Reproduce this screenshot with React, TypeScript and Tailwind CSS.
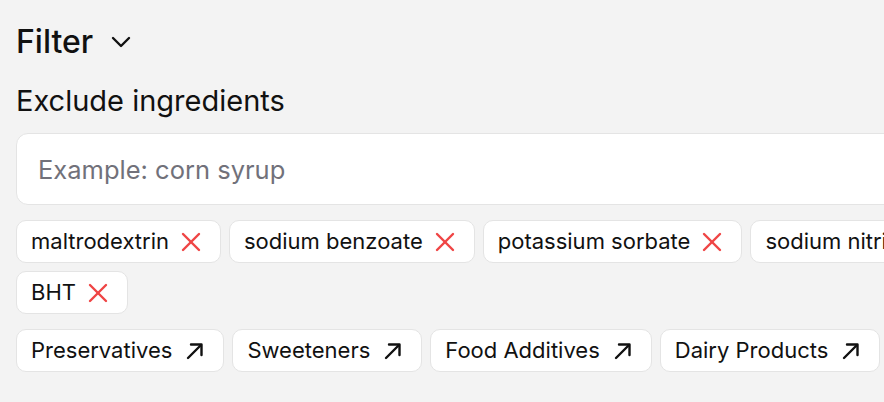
const excluded = [
  "maltrodextrin",
  "sodium benzoate",
  "potassium sorbate",
  "sodium nitrite",
  "BHT",
];

const categories = [
  "Preservatives",
  "Sweeteners",
  "Food Additives",
  "Dairy Products",
];

function ChevronIcon() {
  return (
    <svg width="20" height="12" viewBox="0 0 20 12" fill="none" stroke="currentColor" strokeWidth="2.4" strokeLinecap="round" strokeLinejoin="round">
      <polyline points="2,2 10,10 18,2" />
    </svg>
  );
}

function CrossIcon() {
  return (
    <svg width="20" height="20" viewBox="0 0 20 20" fill="none" stroke="#ef4444" strokeWidth="2.4" strokeLinecap="round">
      <line x1="2" y1="2" x2="18" y2="18" />
      <line x1="18" y1="2" x2="2" y2="18" />
    </svg>
  );
}

function ArrowIcon() {
  return (
    <svg width="18" height="18" viewBox="0 0 18 18" fill="none" stroke="currentColor" strokeWidth="2.4" strokeLinecap="round" strokeLinejoin="round">
      <line x1="2" y1="16" x2="15" y2="3" />
      <polyline points="5,2.5 15.5,2.5 15.5,13" />
    </svg>
  );
}

export default function App() {
  return (
    <div
      className="min-h-[402px] w-[1032px] bg-[#f3f3f3] px-4 pt-[22px] text-[#111111]"
      style={{ fontFamily: "Inter, 'Noto Sans', sans-serif" }}
    >
      <button className="flex items-center gap-[18px]">
        <span className="text-[32px] font-medium leading-[40px]">Filter</span>
        <ChevronIcon />
      </button>

      <h2 className="mt-[21px] text-[29px] leading-[36px]">
        Exclude ingredients
      </h2>

      <input
        type="text"
        placeholder="Example: corn syrup"
        className="mt-[14px] h-[72px] w-[1000px] rounded-[12px] border border-[#e4e4e4] bg-white px-[21px] text-[25.5px] outline-none placeholder:text-[#71717a]"
      />

      <div className="mt-[15px] flex w-[1000px] flex-wrap gap-2">
        {excluded.map((name) => (
          <span
            key={name}
            className="flex h-[43px] items-center gap-[12px] rounded-[10px] border border-[#e4e4e4] bg-white pl-[14px] pr-[19px] text-[22px]"
          >
            {name}
            <CrossIcon />
          </span>
        ))}
      </div>

      <div className="mt-[15px] flex w-[1000px] flex-wrap gap-2">
        {categories.map((name) => (
          <a
            key={name}
            className="flex h-[43px] items-center gap-[14px] rounded-[10px] border border-[#e4e4e4] bg-white pl-[14px] pr-[19px] text-[22px]"
          >
            {name}
            <ArrowIcon />
          </a>
        ))}
      </div>
    </div>
  );
}
